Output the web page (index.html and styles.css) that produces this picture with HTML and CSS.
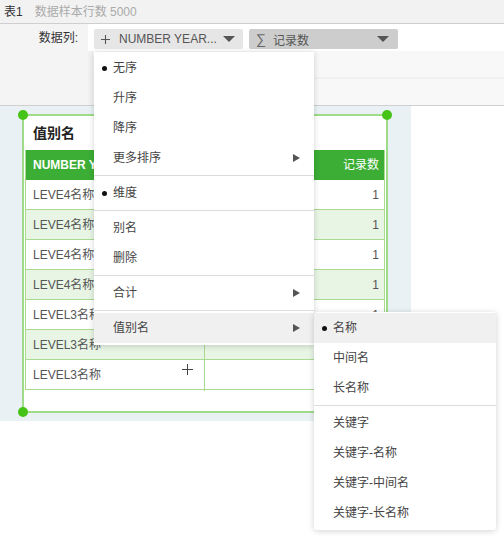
FILE: index.html
```html
<!DOCTYPE html>
<html>
<head>
<meta charset="utf-8">
<link rel="stylesheet" href="styles.css">
</head>
<body>
<div class="topbar"><span class="tname">表1</span><span class="tinfo">数据样本行数 5000</span></div>
<div class="config">
  <div class="labels"><div class="lbl">数据列:</div></div>
  <div class="fields">
    <div class="row1">
      <div class="dd dd1">
        <svg class="plus" width="9" height="9" viewBox="0 0 9 9"><path d="M4.5 0V9M0 4.5H9" stroke="#555" stroke-width="1.1" fill="none"/></svg>
        <span class="ddtext">NUMBER YEAR...</span>
        <span class="caret"></span>
      </div>
      <div class="dd dd2">
        <span class="sigma">∑</span>
        <span class="ddtext">记录数</span>
        <span class="caret"></span>
      </div>
    </div>
    <div class="row2"></div>
    <div class="row3"></div>
  </div>
</div>
<div class="stage">
  <div class="canvas">
    <div class="widget">
      <span class="handle h-tl"></span>
      <span class="handle h-tr"></span>
      <span class="handle h-bl"></span>
      <span class="handle h-br"></span>
      <div class="wtitle">值别名</div>
      <div class="tbl">
        <div class="trow head"><div class="c1">NUMBER YEAR</div><div class="c2">记录数</div></div>
        <div class="trow"><div class="c1">LEVE4名称</div><div class="c2">1</div></div>
        <div class="trow alt"><div class="c1">LEVE4名称</div><div class="c2">1</div></div>
        <div class="trow"><div class="c1">LEVE4名称</div><div class="c2">1</div></div>
        <div class="trow alt"><div class="c1">LEVE4名称</div><div class="c2">1</div></div>
        <div class="trow"><div class="c1">LEVEL3名称</div><div class="c2">1</div></div>
        <div class="trow alt"><div class="c1">LEVEL3名称</div><div class="c2">1</div></div>
        <div class="trow"><div class="c1">LEVEL3名称<svg class="cross" width="11" height="11" viewBox="0 0 11 11"><path d="M5.5 0V11M0 5.5H11" stroke="#444" stroke-width="1" fill="none"/></svg></div><div class="c2">1</div></div>
      </div>
    </div>
  </div>
</div>

<div class="menu main">
  <div class="mi"><span class="dot"></span>无序</div>
  <div class="mi">升序</div>
  <div class="mi">降序</div>
  <div class="mi">更多排序<span class="arrow"></span></div>
  <div class="sep"></div>
  <div class="mi"><span class="dot"></span>维度</div>
  <div class="sep"></div>
  <div class="mi">别名</div>
  <div class="mi">删除</div>
  <div class="sep"></div>
  <div class="mi">合计<span class="arrow"></span></div>
  <div class="sep"></div>
  <div class="mi hl">值别名<span class="arrow"></span></div>
</div>

<div class="menu sub">
  <div class="mi hl"><span class="dot"></span>名称</div>
  <div class="mi">中间名</div>
  <div class="mi">长名称</div>
  <div class="sep"></div>
  <div class="mi">关键字</div>
  <div class="mi">关键字-名称</div>
  <div class="mi">关键字-中间名</div>
  <div class="mi">关键字-长名称</div>
</div>
</body>
</html>
```

FILE: styles.css
```css
* { box-sizing: border-box; }
html, body { margin: 0; padding: 0; }
body {
  width: 504px;
  height: 536px;
  background: #fff;
  font-family: "Liberation Sans", "Noto Sans CJK SC", sans-serif;
  font-size: 12px;
  color: #333;
  position: relative;
  overflow: hidden;
}

.topbar {
  height: 24px;
  background: #f2f2f2;
  border-bottom: 1px solid #cfcfcf;
  display: flex;
  align-items: center;
  padding-left: 4px;
  line-height: 1;
}
.tname { color: #333; }
.tinfo { color: #aaa; margin-left: 12px; }

.config {
  display: flex;
  height: 82px;
  border-bottom: 1px solid #cfcfcf;
}
.labels {
  width: 88px;
  background: #f4f4f4;
}
.lbl {
  height: 27px;
  line-height: 28px;
  text-align: right;
  padding-right: 10px;
  color: #333;
}
.fields {
  flex: 1;
  background: #f1f1f1;
  display: flex;
  flex-direction: column;
}
.row1 {
  height: 27px;
  background: #fff;
  display: flex;
  gap: 6px;
  padding: 5px 0 0 6px;
}
.row2 {
  height: 27px;
  margin-left: 5px;
  background: #f8f8f8;
}
.row3 {
  height: 26px;
  margin-top: 2px;
  margin-left: 5px;
  background: #f8f8f8;
}
.dd {
  width: 149px;
  height: 20px;
  border-radius: 2px;
  display: flex;
  align-items: center;
  color: #555;
}
.dd1 { background: #e6e6e6; padding-left: 7px; }
.dd2 { background: #cdcdcd; padding-left: 7px; }
.plus { display: block; margin-right: 9px; }
.sigma { font-size: 14px; color: #666; margin-right: 7px; }
.caret {
  margin-left: auto;
  margin-right: 8px;
  width: 0; height: 0;
  border-left: 6px solid transparent;
  border-right: 6px solid transparent;
  border-top: 6px solid #555;
}
.dd2 .caret { margin-right: 9px; }

.stage { display: flex; }
.canvas {
  width: 411px;
  height: 315px;
  background: #e9f1f4;
  padding: 8px 0 0 22px;
}
.widget {
  position: relative;
  width: 366px;
  height: 299px;
  background: #fff;
  border: 2px solid #9fdc8a;
}
.handle {
  position: absolute;
  display: block;
  width: 10px;
  height: 10px;
  border-radius: 50%;
  background: #45c316;
}
.h-tl { left: -6px; top: -6px; }
.h-tr { right: -6px; top: -6px; }
.h-bl { left: -6px; bottom: -6px; }
.h-br { right: -6px; bottom: -6px; }

.wtitle {
  height: 34px;
  line-height: 34px;
  padding-left: 9px;
  font-size: 14px;
  font-weight: bold;
  color: #222;
}
.tbl {
  margin: 0 1px;
  width: 360px;
  border-left: 1px solid #a9da92;
  border-right: 1px solid #a9da92;
}
.trow {
  display: grid;
  grid-template-columns: 179px 179px;
  height: 30px;
  border-bottom: 1px solid #a9da92;
  color: #555;
}
.trow .c1 {
  padding-left: 7px;
  line-height: 31px;
  border-right: 1px solid #a9da92;
  position: relative;
  white-space: nowrap;
  overflow: hidden;
}
.trow .c2 {
  text-align: right;
  padding-right: 5px;
  line-height: 31px;
}
.trow.alt { background: #e8f5e5; }
.trow.head {
  background: #3cae35;
  color: #fff;
  border-bottom-color: #3cae35;
}
.trow.head .c1 { border-right: none; font-weight: bold; }
.cross { position: absolute; left: 156px; top: 4px; }

.menu {
  position: absolute;
  background: #fff;
  box-shadow: 0 1px 6px rgba(0,0,0,0.18);
  color: #444;
}
.menu.main {
  left: 94px;
  top: 52px;
  width: 220px;
  padding: 1px 0 2px;
}
.menu.sub {
  left: 314px;
  top: 312px;
  width: 182px;
  padding: 1px 0 2px;
  border-radius: 3px;
}
.mi {
  position: relative;
  height: 30px;
  line-height: 30px;
  padding-left: 19px;
}
.mi.hl { background: #f0f0f0; }
.dot {
  position: absolute;
  left: 8px;
  top: 13px;
  width: 5px;
  height: 5px;
  border-radius: 50%;
  background: #111;
}
.arrow {
  position: absolute;
  right: 14px;
  top: 11px;
  width: 0; height: 0;
  border-top: 4px solid transparent;
  border-bottom: 4px solid transparent;
  border-left: 7px solid #555;
}
.sep {
  height: 1px;
  margin: 2px 0;
  background: #dcdcdc;
}
```
